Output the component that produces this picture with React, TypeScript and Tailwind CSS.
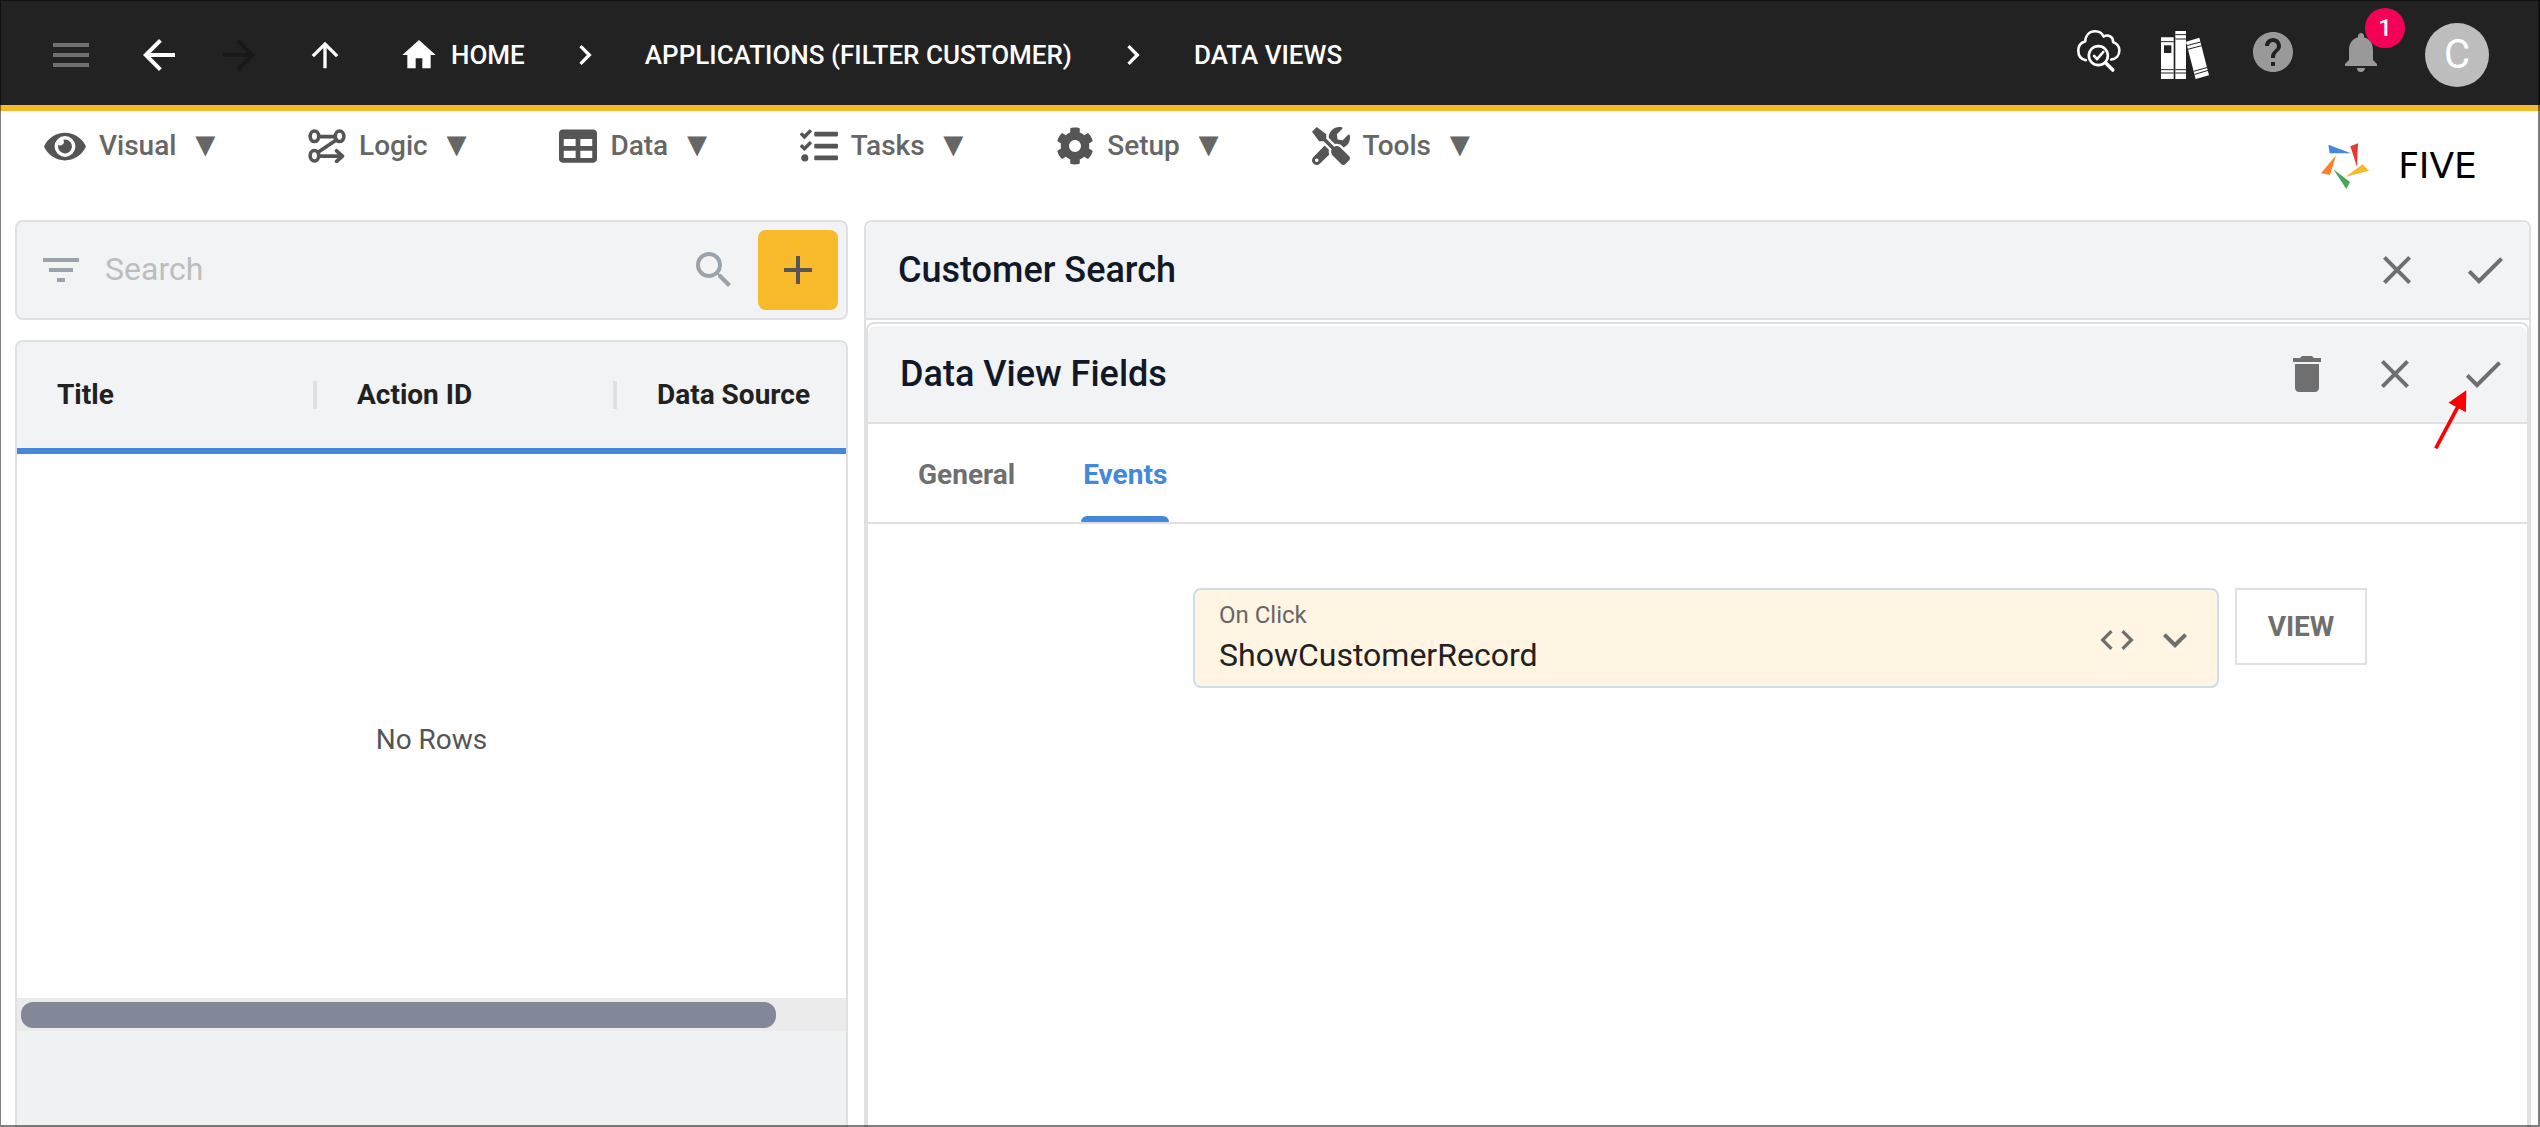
import type { ReactNode } from "react";
import { FaCog, FaEye, FaTable, FaTasks, FaTools } from "react-icons/fa";
import {
  MdAdd,
  MdArrowBack,
  MdArrowForward,
  MdArrowUpward,
  MdCheck,
  MdChevronRight,
  MdClose,
  MdCode,
  MdDelete,
  MdFilterList,
  MdHelp,
  MdHome,
  MdKeyboardArrowDown,
  MdMenu,
  MdNotifications,
  MdSearch,
} from "react-icons/md";

function LogicIcon() {
  return (
    <svg viewBox="0 0 112 103" className="h-[34px] w-[38px]" fill="none" stroke="currentColor" strokeWidth="11" strokeLinecap="round" strokeLinejoin="round">
      <ellipse cx="18" cy="22" rx="13" ry="16" />
      <ellipse cx="94" cy="22" rx="13" ry="16" />
      <ellipse cx="18" cy="81" rx="13" ry="16" />
      <path d="M32 23H80M30 70L84 33M32 82H102M85 66L103 82L85 98" />
    </svg>
  );
}

function CloudSearchIcon() {
  return (
    <svg viewBox="0 0 134 130" className="h-11 w-11" fill="none" stroke="currentColor" strokeWidth="8" strokeLinecap="round" strokeLinejoin="round">
      <path d="M27 93C11 90 4 78 4 64C4 50 12 39 25 36C26 17 38 5 55 5C68 5 77 12 81 21C95 13 111 22 110 38C123 42 129 52 129 63C129 80 118 90 104 91" />
      <circle cx="65" cy="79" r="29" />
      <path d="M52 80L61 90L80 68" />
      <path d="M87 101L109 123" strokeWidth="11" />
    </svg>
  );
}

function BooksIcon() {
  return (
    <svg viewBox="0 0 144 144" className="size-12">
      <path fill="currentColor" d="M0 19H38V144H0ZM43 0H75V144H43Z" />
      <path fill="currentColor" d="M75 32L115 20L144 133L104 144Z" />
      <g stroke="#222" strokeWidth="3" fill="none">
        <path d="M0 32H38M0 116H38M0 126H38M43 11H75M43 24H75M43 116H75M43 126H75" />
        <path d="M77 44L119 33M80 55L122 44M98 121L140 109M101 130L142 118" />
      </g>
      <path fill="#222" d="M9 43H31V66H9Z" />
    </svg>
  );
}

function Pinwheel() {
  return (
    <svg viewBox="0 0 144 138" className="h-[46px] w-12">
      <path fill="#4388db" d="M22 5L90 31L26 31Z" />
      <path fill="#e53935" d="M88 10L111 1L108 72Z" />
      <path fill="#f8b92b" d="M125 64L144 83L73 102Z" />
      <path fill="#43a755" d="M37 79L87 117L76 138Z" />
      <path fill="#ff8126" d="M45 37L27 96L0 91Z" />
    </svg>
  );
}

const menus: { label: string; icon: ReactNode }[] = [
  { label: "Visual", icon: <FaEye className="h-[37px] w-[42px]" /> },
  { label: "Logic", icon: <LogicIcon /> },
  { label: "Data", icon: <FaTable className="size-[38px]" /> },
  { label: "Tasks", icon: <FaTasks className="size-[38px]" /> },
  { label: "Setup", icon: <FaCog className="size-[38px]" /> },
  { label: "Tools", icon: <FaTools className="size-[38px]" /> },
];

function TopBar() {
  return (
    <header className="flex h-[111px] shrink-0 items-center border-b-[6px] border-[#f8b92b] bg-[#222] pt-1 pr-[51px] pl-[47px] text-white">
      <button aria-label="Menu" className="text-[#6f6f6f]"><MdMenu className="size-12" /></button>
      <button aria-label="Back" className="ml-10"><MdArrowBack className="size-12" /></button>
      <button aria-label="Forward" className="ml-8 text-[#181818]"><MdArrowForward className="size-12" /></button>
      <button aria-label="Up" className="ml-[42px]"><MdArrowUpward className="size-10" /></button>
      <nav aria-label="Breadcrumb" className="flex items-center text-[26px] leading-10 font-medium">
        <a href="#home" className="ml-[54px] flex items-center gap-3"><MdHome className="size-10" />HOME</a>
        <MdChevronRight className="mx-10 size-10" />
        <a href="#applications">APPLICATIONS (FILTER CUSTOMER)</a>
        <MdChevronRight className="mx-[41px] size-10" />
        <a href="#data-views">DATA VIEWS</a>
      </nav>
      <div className="ml-auto flex items-center">
        <button aria-label="Inspect" className="mb-2"><CloudSearchIcon /></button>
        <button aria-label="Library" className="ml-10"><BooksIcon /></button>
        <button aria-label="Help" className="mb-1.5 ml-10 text-[#999]"><MdHelp className="size-12" /></button>
        <button aria-label="Notifications" className="relative mb-1.5 ml-10 text-[#999]">
          <MdNotifications className="size-12" />
          <span className="absolute -top-5 -right-5 flex size-10 items-center justify-center rounded-full bg-[#f50057] text-2xl font-medium text-white">1</span>
        </button>
        <button aria-label="Account" className="ml-10 flex size-16 items-center justify-center rounded-full bg-[#bdbdbd] text-[40px]">C</button>
      </div>
    </header>
  );
}

function MenuBar() {
  return (
    <div className="flex h-[109px] shrink-0 items-start justify-between pr-[45px] pl-11">
      <nav className="flex gap-[86px] pt-3">
        {menus.map((m) => (
          <button key={m.label} className="flex h-[46px] items-center text-[28px] font-medium text-[#666]">
            <span className="mr-[13px] text-[#555]">{m.icon}</span>
            {m.label}
            <span className="ml-3 pb-1 text-[34px] leading-10">▼</span>
          </button>
        ))}
      </nav>
      <div className="flex w-[174px] items-center gap-[11px] pt-8">
        <Pinwheel />
        <span className="flex-1 text-center font-['DejaVu_Sans'] text-[36px] leading-[46px] text-black">FIVE</span>
      </div>
    </div>
  );
}

function Sidebar() {
  return (
    <aside className="flex w-[833px] shrink-0 flex-col gap-5">
      <div className="flex h-[100px] shrink-0 items-center rounded-lg border-2 border-[#e0e0e0] bg-[#f1f3f5] pr-2 pl-5 text-[#9aa3ab]">
        <button aria-label="Filter"><MdFilterList className="size-12" /></button>
        <input type="search" aria-label="Search" placeholder="Search" className="ml-5 min-w-0 flex-1 bg-transparent pb-0.5 text-[32px] text-[#212121] outline-none placeholder:text-[#bdbdbd]" />
        <button aria-label="Run search"><MdSearch className="size-12" /></button>
        <button aria-label="Add" className="ml-5 flex size-20 items-center justify-center rounded-lg bg-[#f8b92b] text-[#555]"><MdAdd className="size-12" /></button>
      </div>
      <div className="flex min-h-0 flex-1 flex-col overflow-hidden rounded-t-lg border-2 border-b-0 border-[#e0e0e0] bg-[#eef2f3]">
        <table className="w-full table-fixed text-left">
          <thead>
            <tr className="h-[109px] border-b-[6px] border-[#4388db] bg-[#f1f3f5] text-[28px] text-[#212121]">
              {["Title", "Action ID", "Data Source"].map((h, i) => (
                <th key={h} scope="col" className={i < 2 ? "w-[300px] p-0 font-bold" : "p-0 font-bold"}>
                  <div className={i < 2 ? "flex h-7 items-center border-r-4 border-[#e0e0e0] pl-10" : "flex h-7 items-center pl-10"}>{h}</div>
                </th>
              ))}
            </tr>
          </thead>
        </table>
        <div className="flex min-h-0 flex-1 items-center justify-center bg-white pt-7 text-[28px] text-[#555]">No Rows</div>
        <div className="h-[33px] shrink-0 bg-[#ebebeb] px-1 pt-1">
          <div className="h-[26px] w-[92%] rounded-xl bg-[#828898]" />
        </div>
        <div className="h-24 shrink-0" />
      </div>
    </aside>
  );
}

function PanelHeader({ title, deletable = false }: { title: string; deletable?: boolean }) {
  return (
    <div className="flex h-[98px] items-center rounded-t-lg border-b-2 border-[#e0e0e0] bg-[#f1f3f5] pr-5 pl-8 text-[#6f6f6f]">
      <h2 className="mr-auto text-[36px] font-medium text-[#111827]">{title}</h2>
      {deletable && <button aria-label="Delete"><MdDelete className="size-12" /></button>}
      <button aria-label="Cancel" className="ml-10"><MdClose className="size-12" /></button>
      <button aria-label="Save" className="ml-10"><MdCheck className="size-12" /></button>
    </div>
  );
}

function Detail() {
  return (
    <main className="relative flex min-w-0 flex-1 flex-col rounded-t-lg border-2 border-b-0 border-[#e0e0e0]">
      <PanelHeader title="Customer Search" />
      <section className="mt-0.5 flex-1 rounded-t-lg border-2 border-b-0 border-[#e0e0e0] pt-0.5">
        <PanelHeader title="Data View Fields" deletable />
        <div role="tablist" className="flex h-[100px] gap-16 border-b-2 border-[#e0e0e0] pl-12 text-[28px] font-bold">
          <button role="tab" aria-selected="false" className="px-0.5 pt-1 text-[#6f6f6f]">General</button>
          <button role="tab" aria-selected="true" className="relative px-0.5 pt-1 text-[#4388db]">
            Events
            <span className="absolute inset-x-0 bottom-0 h-1.5 rounded-t-md bg-[#4388db]" />
          </button>
        </div>
        <div className="flex items-start gap-4 pt-16 pr-40 pl-[325px]">
          <div className="flex h-[100px] min-w-0 flex-1 items-center rounded-lg border-2 border-[#cddcea] bg-[#fff5e2] pr-[18px] pl-6 text-[#6f6f6f]">
            <div className="flex min-w-0 flex-1 flex-col pt-0.5">
              <label htmlFor="on-click" className="text-2xl leading-8 text-[#666]">On Click</label>
              <select id="on-click" className="h-12 appearance-none bg-transparent text-[32px] leading-[48px] text-[#212121] outline-none">
                <option>ShowCustomerRecord</option>
              </select>
            </div>
            <button aria-label="Edit code" className="mt-1"><MdCode className="size-10" /></button>
            <MdKeyboardArrowDown className="mt-1 ml-[14px] size-12" />
          </div>
          <button className="h-[77px] w-[132px] border-2 border-[#e0e0e0] text-[28px] font-bold text-[#6f6f6f]">VIEW</button>
        </div>
      </section>
      <svg viewBox="0 0 98 176" className="pointer-events-none absolute top-[168px] right-[62px] h-[59px] w-[33px]">
        <path d="M5 174L72 48" stroke="#f00" strokeWidth="11" />
        <path d="M96 1L43 38L95 66Z" fill="#f00" />
      </svg>
    </main>
  );
}

export default function App() {
  return (
    <div className="relative flex h-screen flex-col overflow-hidden bg-white font-[Roboto,sans-serif]">
      <TopBar />
      <MenuBar />
      <div className="flex min-h-0 flex-1 gap-4 pr-[9px] pl-[15px]">
        <Sidebar />
        <Detail />
      </div>
      <div className="pointer-events-none absolute inset-0 border-t border-r-2 border-b-2 border-l border-black/50" />
    </div>
  );
}
